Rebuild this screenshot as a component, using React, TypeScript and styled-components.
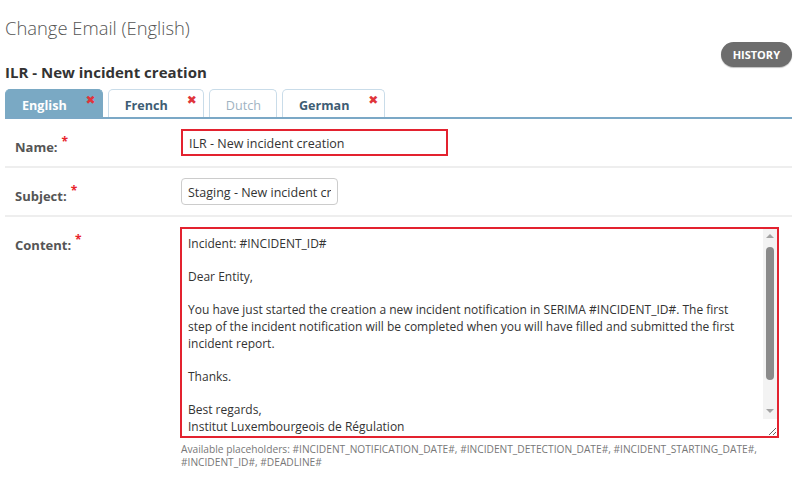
import React from 'react';
import styled, { createGlobalStyle } from 'styled-components';

const GlobalStyle = createGlobalStyle`
  body {
    margin: 0;
    background: #ffffff;
    font-family: "Open Sans", "Noto Sans", sans-serif;
    color: #333;
  }
`;

const Page = styled.div`
  padding: 14px 8px 0 5px;
`;

const Title = styled.h1`
  margin: 0;
  font-size: 18.4px;
  font-weight: 300;
  color: #555;
  line-height: 28px;
`;

const HeaderRow = styled.div`
  display: flex;
  justify-content: space-between;
  align-items: flex-start;
`;

const Subtitle = styled.h2`
  margin: 20px 0 0;
  font-size: 15px;
  font-weight: 700;
  color: #333;
  line-height: 20px;
`;

const HistoryButton = styled.button`
  height: 25px;
  padding: 0 12px;
  border: none;
  border-radius: 13px;
  background: #6d6d6d;
  color: #fff;
  font-family: inherit;
  font-size: 11px;
  font-weight: 700;
  box-shadow: 0 1px 1px rgba(0, 0, 0, 0.25);
`;

const TabBar = styled.div`
  display: flex;
  gap: 5px;
  margin-top: 7px;
  border-bottom: 2px solid #7ba8c6;
`;

const Tab = styled.div<{ $active?: boolean; $closable?: boolean; $disabled?: boolean }>`
  position: relative;
  height: 28px;
  display: flex;
  align-items: center;
  padding: 3px ${p => (p.$closable ? '35px' : '15px')} 0 16px;
  box-sizing: border-box;
  border: 1px solid ${p => (p.$active ? '#7aa9c4' : '#c9dce9')};
  border-bottom: none;
  border-radius: 5px 5px 0 0;
  background: ${p => (p.$active ? '#7aa9c4' : '#fff')};
  color: ${p => (p.$active ? '#fff' : p.$disabled ? '#9fb3c2' : '#3e5d74')};
  font-size: 12.6px;
  font-weight: ${p => (p.$disabled ? 400 : 700)};
`;

const CloseMark = styled.span`
  position: absolute;
  top: 3px;
  right: 6px;
  color: #e0353b;
  font-size: 12px;
  font-weight: 700;
  font-family: "DejaVu Sans", sans-serif;
`;

const FormRow = styled.div`
  display: grid;
  grid-template-columns: 176px 1fr;
  padding: 10px 0;
  border-bottom: 2px solid #eeeeee;
  &:last-child {
    border-bottom: none;
  }
`;

const Label = styled.label`
  padding: 10px 0 0 10px;
  font-size: 13px;
  font-weight: 700;
  color: #555;
  line-height: 17px;
`;

const Required = styled.span`
  position: relative;
  top: -6px;
  margin-left: 4px;
  color: #e8232b;
  font-size: 12px;
`;

const TextInput = styled.input<{ $invalid?: boolean; $width: number }>`
  box-sizing: border-box;
  display: block;
  width: ${p => p.$width}px;
  height: 27px;
  padding: 2px 6px 0;
  border: ${p => (p.$invalid ? '2px solid #e3222f' : '1px solid #cccccc')};
  border-radius: ${p => (p.$invalid ? '0' : '4px')};
  font-family: inherit;
  font-size: 12.5px;
  color: #333;
  outline: none;
`;

const AreaWrap = styled.div`
  position: relative;
  width: 599px;
  margin-left: -1px;
`;

const ContentArea = styled.textarea`
  box-sizing: border-box;
  display: block;
  width: 100%;
  height: 211px;
  padding: 7px 27px 5px 6px;
  border: 2px solid #e3222f;
  font-family: inherit;
  font-size: 12px;
  line-height: 16.6px;
  color: #333;
  resize: vertical;
  overflow: hidden;
  outline: none;
`;

const ScrollRail = styled.div`
  position: absolute;
  top: 2px;
  right: 2px;
  bottom: 19px;
  width: 14px;
  display: flex;
  flex-direction: column;
  align-items: center;
  background: #f3f3f3;
`;

const Arrow = styled.div<{ $down?: boolean }>`
  flex: none;
  width: 0;
  height: 0;
  margin: ${p => (p.$down ? 'auto 0 6px' : '5px 0 0')};
  border-left: 4px solid transparent;
  border-right: 4px solid transparent;
  ${p => (p.$down ? 'border-top: 4px solid #a3a3a3;' : 'border-bottom: 4px solid #a3a3a3;')}
`;

const Thumb = styled.div`
  flex: none;
  width: 8px;
  margin-top: 9px;
  border-radius: 4px;
  background: #8a8a8a;
`;

const HelpText = styled.div`
  margin-top: 5px;
  font-size: 10.2px;
  line-height: 13px;
  color: #777;
`;

const tabs = [
  { name: 'English', active: true, closable: true },
  { name: 'French', closable: true },
  { name: 'Dutch', disabled: true },
  { name: 'German', closable: true },
];

const content = `Incident: #INCIDENT_ID#

Dear Entity,

You have just started the creation a new incident notification in SERIMA #INCIDENT_ID#. The first step of the incident notification will be completed when you will have filled and submitted the first incident report.

Thanks.

Best regards,
Institut Luxembourgeois de Régulation`;

export default function App() {
  return (
    <Page>
      <GlobalStyle />
      <Title>Change Email (English)</Title>
      <HeaderRow>
        <Subtitle>ILR - New incident creation</Subtitle>
        <HistoryButton>HISTORY</HistoryButton>
      </HeaderRow>
      <TabBar>
        {tabs.map(t => (
          <Tab key={t.name} $active={t.active} $closable={t.closable} $disabled={t.disabled}>
            {t.name}
            {t.closable && <CloseMark>✖</CloseMark>}
          </Tab>
        ))}
      </TabBar>
      <div>
        <FormRow>
          <Label>Name:<Required>*</Required></Label>
          <div>
            <TextInput $invalid $width={267} defaultValue="ILR - New incident creation" />
          </div>
        </FormRow>
        <FormRow>
          <Label>Subject:<Required>*</Required></Label>
          <div>
            <TextInput $width={157} defaultValue="Staging - New incident creation" />
          </div>
        </FormRow>
        <FormRow>
          <Label>Content:<Required>*</Required></Label>
          <div>
            <AreaWrap>
              <ContentArea defaultValue={content} />
              <ScrollRail>
                <Arrow />
                <Thumb style={{ height: 133 }} />
                <Arrow $down />
              </ScrollRail>
            </AreaWrap>
            <HelpText>
              Available placeholders: #INCIDENT_NOTIFICATION_DATE#, #INCIDENT_DETECTION_DATE#, #INCIDENT_STARTING_DATE#,
              <br />
              #INCIDENT_ID#, #DEADLINE#
            </HelpText>
          </div>
        </FormRow>
      </div>
    </Page>
  );
}
